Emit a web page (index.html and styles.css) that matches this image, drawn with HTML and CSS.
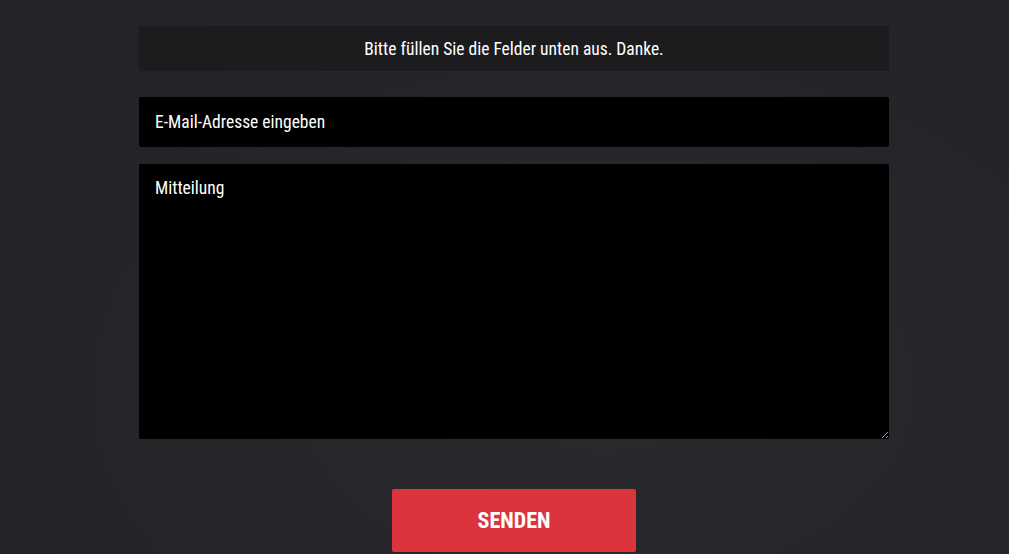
FILE: index.html
```html
<!DOCTYPE html>
<html lang="de">
<head>
    <meta charset="UTF-8">
    <meta name="viewport" content="width=device-width, initial-scale=1.0">
    <title>Kontakt</title>
    <link rel="stylesheet" href="styles.css">
</head>
<body>

    <!-- Kontaktformular -->
    <form class="contact-form" onsubmit="return false;">
        <div class="notice">Bitte füllen Sie die Felder unten aus. Danke.</div>

        <input class="field" type="email" name="email" placeholder="E-Mail-Adresse eingeben">
        <textarea class="field message" name="message" placeholder="Mitteilung"></textarea>

        <div class="actions">
            <button class="send-btn" type="submit">SENDEN</button>
        </div>
    </form>

</body>
</html>
```

FILE: styles.css
```css
* {
    margin: 0;
    padding: 0;
    box-sizing: border-box;
}

html, body {
    height: 100%;
}

body {
    font-family: 'Roboto Condensed', 'Roboto', 'DejaVu Sans Condensed', sans-serif;
    font-stretch: condensed;
    background: radial-gradient(ellipse at 60% 70%, #2a292e 0%, #252428 60%, #232226 100%);
    color: #fff;
    overflow: hidden;
}

.contact-form {
    width: 750px;
    margin-left: 139px;
    padding-top: 26px;
    display: flex;
    flex-direction: column;
}

.notice {
    height: 45px;
    background-color: #1c1c1f;
    border-radius: 2px;
    display: flex;
    align-items: center;
    justify-content: center;
    font-size: 17.5px;
    margin-bottom: 26px;
}

.field {
    font-family: inherit;
    font-stretch: condensed;
    font-size: 17.5px;
    color: #fff;
    background-color: #000;
    border: none;
    border-radius: 2px;
    padding: 0 16px;
    outline: none;
}

.field::placeholder {
    color: #fff;
    opacity: 1;
}

input.field {
    height: 50px;
    margin-bottom: 17px;
}

.message {
    height: 275px;
    padding-top: 14px;
    resize: vertical;
}

.actions {
    display: flex;
    justify-content: center;
    padding-top: 50px;
}

.send-btn {
    width: 244px;
    height: 63px;
    background-color: #db343d;
    color: #fff;
    border: none;
    border-radius: 2px;
    font-family: inherit;
    font-stretch: condensed;
    font-weight: bold;
    font-size: 22px;
    cursor: pointer;
}

.send-btn:hover {
    background-color: #e5404a;
}
```
